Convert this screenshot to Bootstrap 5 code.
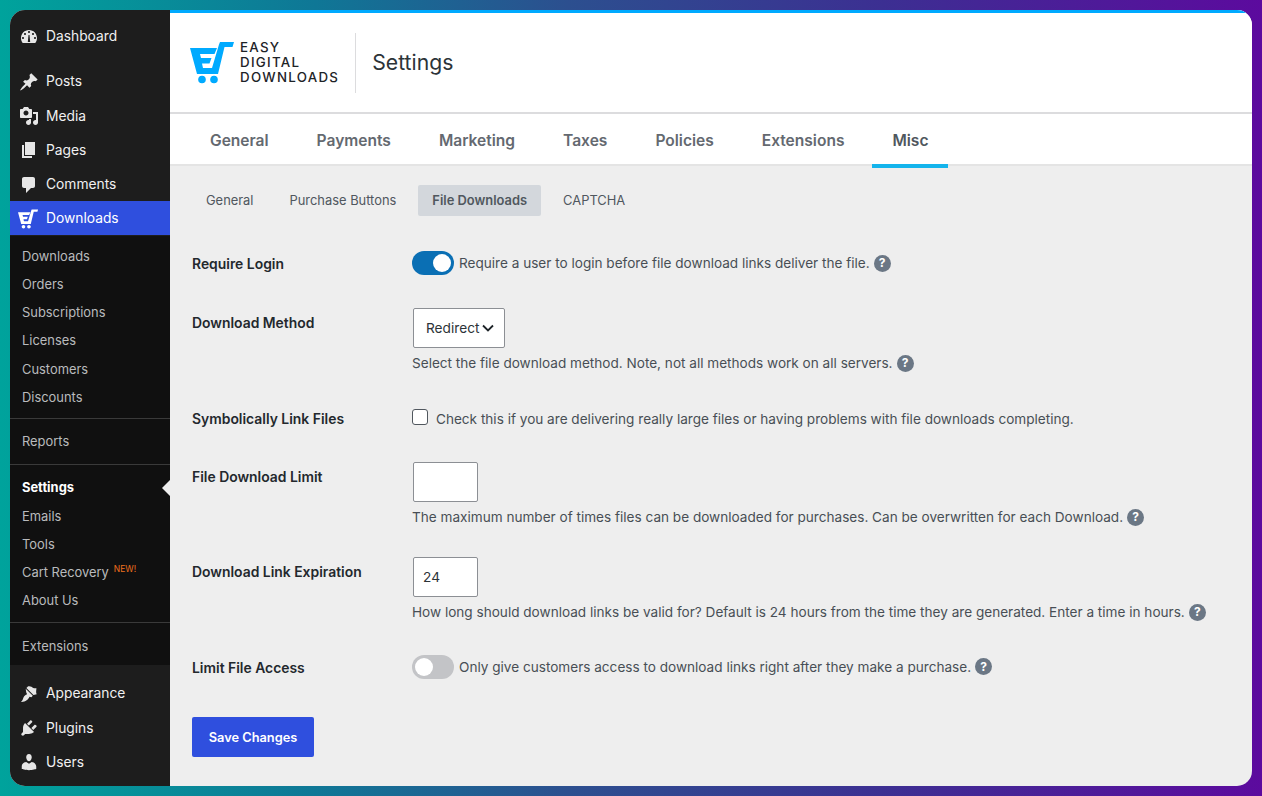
<!doctype html>
<html lang="en"><head><meta charset="utf-8"><title>Settings</title>
<link href="https://cdn.jsdelivr.net/npm/bootstrap@5.3.0/dist/css/bootstrap.min.css" rel="stylesheet">
<style>
html,body{height:100%;margin:0}
body{width:1262px;height:796px;overflow:hidden;padding:10px;font-family:Inter,"Liberation Sans",sans-serif;font-size:13.58px;color:#484e55;background:linear-gradient(90deg,#00a39c 0%,#0f7796 25%,#2c4f8f 45%,#3c2f92 70%,#5c0a9e 100%)}
.wpwin{width:1242px;height:776px;border-radius:15px;overflow:hidden;background:#eee}
.side{width:160px;background:#1d1d1d;flex:none}
.top-item{height:34.3px;color:#f0f0f1;font-size:13.8px;padding:1px 0 0 9px}
.top-item svg{width:20px;height:20px;margin-right:7px;fill:#e6e6e6;flex:none}
.top-item.first{margin-top:9px;margin-bottom:10.8px}
.top-item.active{background:#2f4fde;color:#fff;height:33.5px;padding-left:8px}
.top-item.active svg{fill:#fff;width:21px;margin-right:7px}
.sub{background:#101010;padding:6px 0 5px;margin-top:1px;font-size:12.9px}
.sub-item{height:28.25px;padding:1px 0 0 12px;color:#b9bbbd;display:flex;align-items:center;position:relative}
.sub-item.cur{color:#fff;font-weight:700}
.sub-item.cur::after{content:"";position:absolute;right:0;top:6px;border:8px solid transparent;border-right-color:#eee;border-left:0}
.sep{border-top:1px solid #3a3a3a;margin:7.5px 0 8.5px}
.sep.sep-a{margin:6.5px 0 8.5px}
.sep.sep-b{margin:8px 0 9px}
.newtag{color:#f0701e;font-size:8.5px;position:relative;top:-4px;margin-left:5px}
.after{padding-top:11px}
.headbar{height:104px;background:#fff;border-top:3px solid #00aaff;border-bottom:2px solid #dcdcde;padding-left:20px}
.logo-words{font-size:13.3px;line-height:15px;letter-spacing:1.3px;color:#1d2327;margin-left:4px;font-weight:500}
.vline{width:1px;height:60px;background:#dcdcde;margin:0 16px}
.pagetitle{font-size:21.2px;color:#2c3338;line-height:1}
.maintabs{height:52px;background:#fff;border-bottom:2px solid #e4e4e4;padding-left:20px;gap:8px;flex:none}
.maintab{font-size:15.56px;font-weight:600;color:#646970;padding:4px 20px 0;height:54px;display:flex;align-items:center;text-decoration:none;border-bottom:4px solid transparent}
.maintab.on{border-bottom-color:#14b4ec;color:#50575e}
.subtabs{padding:19px 0 0 22px;gap:8px}
.subtab{font-size:12.9px;color:#50575e;padding:1px 14px 0;height:31px;display:flex;align-items:center;text-decoration:none;border-radius:2px}
.subtab.on{background:#d3d7dc;font-weight:600}
.frow{padding-left:22px;display:flex}
.flabel{width:220px;font-weight:600;color:#23282d;flex:none;font-size:13.9px}
.pad-xs{padding-top:1px}
.pad-sm{padding-top:3px}
.pad-md{padding-top:5px}
.r1{margin-top:35px}.r2{margin-top:33px}.r3{margin-top:34.6px}.r4{margin-top:32px}.r5{margin-top:29.6px}.r6{margin-top:32.6px}.r7{margin-top:38px}
.tog{width:42px;height:24px;border-radius:12px;flex:none;position:relative;margin-right:5px;background:#0a6fb4}
.tog::after{content:"";position:absolute;right:3px;top:3px;width:18px;height:18px;border-radius:50%;background:#fff}
.tog.off{background:#c3c4c7}
.tog.off::after{right:auto;left:3px}
.q{display:inline-flex;width:17px;height:17px;border-radius:50%;background:#6b7785;color:#fff;font-size:12px;font-weight:700;align-items:center;justify-content:center;margin-left:4px;flex:none}
.selbox{width:92px;height:40px;background:#fff;border:1px solid #8c8f94;border-radius:2px;color:#2c3338;font-size:13.7px;margin-left:1px;padding-left:12px}
.selbox svg{width:14px;height:14px;margin-left:1px}
.cbx{width:16px;height:16px;border:1px solid #50575e;border-radius:3px;background:#fff;flex:none;margin:1px 8px 0 0}
.numbox{width:65px;height:40px;background:#fff;border:1px solid #8c8f94;border-radius:2px;margin-left:1px;color:#2c3338;font-size:13.7px;padding:1px 0 0 9px;display:flex;align-items:center}
.hint{margin-top:5px;display:flex;align-items:center;height:20.4px}
.savebtn{width:122px;height:40px;background:#2f4fde;color:#fff;border:0;border-radius:2px;font-weight:600;font-size:12.8px;margin-left:22px;padding:1px 0 0}
</style></head><body>
<div class="wpwin d-flex">
<nav class="side d-flex flex-column">
<div class="top-item first d-flex align-items-center"><svg viewBox="0 0 20 20"><path fill-rule="evenodd" d="M3.760 16h12.480c1.100-1.370 1.760-3.110 1.760-5 0-4.420-3.580-8-8-8s-8 3.580-8 8c0 1.890.66 3.630 1.760 5zM10 4c.55 0 1 .45 1 1s-.45 1-1 1-1-.45-1-1 .45-1 1-1zM6 6c.55 0 1 .45 1 1s-.45 1-1 1-1-.45-1-1 .45-1 1-1zm8 0c.55 0 1 .45 1 1s-.45 1-1 1-1-.45-1-1 .45-1 1-1zM4 10c.55 0 1 .45 1 1s-.45 1-1 1-1-.45-1-1 .45-1 1-1zm12 0c.55 0 1 .45 1 1s-.45 1-1 1-1-.45-1-1 .45-1 1-1zM8.800 15l.7-7h1l.7 7z"/></svg>Dashboard</div>
<div class="top-item d-flex align-items-center"><svg viewBox="0 0 20 20"><path d="M10.440 3.020l1.820-1.820 6.360 6.350-1.830 1.820c-1.050-.68-2.480-.57-3.410.36l-.75.75c-.92.93-1.040 2.350-.35 3.410l-1.830 1.820-2.410-2.410-2.800 2.790c-.42.42-3.380 2.710-3.800 2.290s1.860-3.390 2.280-3.810l2.790-2.790L4.100 9.870l1.830-1.820c1.050.69 2.480.57 3.400-.35l.75-.75c.93-.92 1.050-2.350.36-3.930z"/></svg>Posts</div>
<div class="top-item d-flex align-items-center"><svg viewBox="0 0 20 20"><path fill-rule="evenodd" d="M13 11V4c0-.55-.45-1-1-1h-1.670L9 1H5L3.670 3H2c-.55 0-1 .45-1 1v7c0 .55.45 1 1 1h10c.55 0 1-.45 1-1zM7 4.500c1.380 0 2.500 1.120 2.500 2.500S8.380 9.500 7 9.500 4.500 8.380 4.500 7 5.620 4.500 7 4.500z"/><path d="M14 6h5v10.500c0 1.380-1.120 2.500-2.500 2.500S14 17.880 14 16.500s1.120-2.500 2.500-2.500c.17 0 .34.02.5.05V8h-3V6zm-4 8.050V13h2v3.500c0 1.380-1.120 2.500-2.500 2.500S7 17.880 7 16.500 8.120 14 9.500 14c.17 0 .34.02.5.05z"/></svg>Media</div>
<div class="top-item d-flex align-items-center"><svg viewBox="0 0 20 20"><path d="M6 15V2h10v13H6zm-1 1h8v2H3V5h2v11z"/></svg>Pages</div>
<div class="top-item d-flex align-items-center"><svg viewBox="0 0 20 20"><path d="M5 2h9c1.100 0 2 .9 2 2v7c0 1.100-.9 2-2 2h-2l-5 5v-5H5c-1.100 0-2-.9-2-2V4c0-1.100.9-2 2-2z"/></svg>Comments</div>
<div class="top-item active d-flex align-items-center"><svg viewBox="0 0 46 44" preserveAspectRatio="none"><path d="M0 7h27l-2.500 6H10l1 4h10.500l-2 5.500H12l1 4.500h9L29 3.500 30 1h14l-1.500 5h-8L28 33H7z"/><circle cx="12" cy="39" r="4"/><circle cx="24" cy="39" r="4"/></svg>Downloads</div>
<div class="sub">
<div class="sub-item">Downloads</div><div class="sub-item">Orders</div><div class="sub-item">Subscriptions</div><div class="sub-item">Licenses</div><div class="sub-item">Customers</div><div class="sub-item">Discounts</div>
<div class="sep sep-a"></div><div class="sub-item">Reports</div><div class="sep sep-b"></div>
<div class="sub-item cur">Settings</div><div class="sub-item">Emails</div><div class="sub-item">Tools</div><div class="sub-item">Cart Recovery<span class="newtag">NEW!</span></div><div class="sub-item">About Us</div>
<div class="sep"></div><div class="sub-item">Extensions</div>
</div>
<div class="after">
<div class="top-item d-flex align-items-center"><svg viewBox="0 0 20 20"><path d="M14.480 11.060L7.410 3.990l1.500-1.500c.5-.56 2.300-.47 3.510.32 1.210.8 1.430 1.280 2.660 1.420 1.200.14 2.360.06 2.360.06l-.25 2.380c-.06.75-.17 1.880.52 3.540zM6.700 4.700l7.100 7.100-1.400 1.400-2-.4c-.6 2.600-4.600 5.600-8.400 5.200 1.800-1.500 2-3.300 2.600-4.700.6-1.300 2-2.600 3.500-3l-.9-2.100z"/></svg>Appearance</div>
<div class="top-item d-flex align-items-center"><svg viewBox="0 0 20 20"><path d="M13.110 4.360L9.870 7.600 8 5.730l3.240-3.240c.35-.34 1.050-.2 1.560.32.52.51.66 1.210.31 1.550zm-8 1.770l.91-1.120 9.010 9.010-1.190.84c-.71.71-2.630 1.160-3.820 1.160H6.140L4.900 17.260c-.59.59-1.540.59-2.120 0-.59-.58-.59-1.530 0-2.120l1.240-1.240v-3.880c0-1.130.4-3.050 1.110-3.760zm7.260 3.970l3.240-3.240c.34-.35 1.040-.21 1.550.31.52.51.66 1.210.31 1.560l-3.240 3.240z"/></svg>Plugins</div>
<div class="top-item d-flex align-items-center"><svg viewBox="0 0 20 20"><path d="M10 9.250c-2.270 0-2.730-3.440-2.730-3.440C7 4.020 7.820 2 9.970 2c2.160 0 2.980 2.020 2.710 3.810 0 0-.41 3.440-2.680 3.440zm0 2.570L12.720 10c2.390 0 4.520 2.330 4.520 4.530v2.490s-3.650 1.130-7.240 1.130c-3.650 0-7.240-1.130-7.240-1.130v-2.490c0-2.250 1.940-4.480 4.470-4.480z"/></svg>Users</div>
</div>
</nav>
<main class="flex-grow-1 d-flex flex-column">
<header class="headbar d-flex align-items-center">
<svg width="46" height="44" viewBox="0 0 46 44"><path fill="#00aaff" d="M0 7h27l-2.500 6H10l1 4h10.500l-2 5.500H12l1 4.500h9L29 3.500 30 1h14l-1.500 5h-8L28 33H7z"/><circle cx="12" cy="38.500" r="3.800" fill="#00aaff"/><circle cx="24" cy="38.500" r="3.800" fill="#00aaff"/></svg>
<div class="logo-words">EASY<br>DIGITAL<br>DOWNLOADS</div>
<div class="vline"></div><div class="pagetitle">Settings</div>
</header>
<div class="maintabs d-flex">
<a class="maintab" href="#">General</a><a class="maintab" href="#">Payments</a><a class="maintab" href="#">Marketing</a><a class="maintab" href="#">Taxes</a><a class="maintab" href="#">Policies</a><a class="maintab" href="#">Extensions</a><a class="maintab on" href="#">Misc</a>
</div>
<div class="subtabs d-flex">
<a class="subtab" href="#">General</a><a class="subtab" href="#">Purchase Buttons</a><a class="subtab on" href="#">File Downloads</a><a class="subtab" href="#">CAPTCHA</a>
</div>
<div class="frow r1"><div class="flabel pad-sm">Require Login</div><div class="d-flex align-items-center"><span class="tog"></span><span>Require a user to login before file download links deliver the file.</span><span class="q">?</span></div></div>
<div class="frow r2"><div class="flabel pad-md">Download Method</div><div><div class="selbox d-flex align-items-center">Redirect<svg viewBox="0 0 14 14"><path d="M2 4.500l5 5 5-5" fill="none" stroke="#1d2327" stroke-width="1.800"/></svg></div><div class="hint">Select the file download method. Note, not all methods work on all servers.<span class="q">?</span></div></div></div>
<div class="frow r3"><div class="flabel pad-xs">Symbolically Link Files</div><div class="d-flex align-items-start"><span class="cbx"></span><span class="pad-xs">Check this if you are delivering really large files or having problems with file downloads completing.</span></div></div>
<div class="frow r4"><div class="flabel pad-md">File Download Limit</div><div><div class="numbox"></div><div class="hint">The maximum number of times files can be downloaded for purchases. Can be overwritten for each Download.<span class="q">?</span></div></div></div>
<div class="frow r5"><div class="flabel pad-md">Download Link Expiration</div><div><div class="numbox">24</div><div class="hint">How long should download links be valid for? Default is 24 hours from the time they are generated. Enter a time in hours.<span class="q">?</span></div></div></div>
<div class="frow r6"><div class="flabel pad-sm">Limit File Access</div><div class="d-flex align-items-center"><span class="tog off"></span><span>Only give customers access to download links right after they make a purchase.</span><span class="q">?</span></div></div>
<div class="r7"><button class="savebtn btn" type="button">Save Changes</button></div>
</main>
</div>
<script src="https://cdn.jsdelivr.net/npm/bootstrap@5.3.0/dist/js/bootstrap.bundle.min.js"></script>
</body></html>
